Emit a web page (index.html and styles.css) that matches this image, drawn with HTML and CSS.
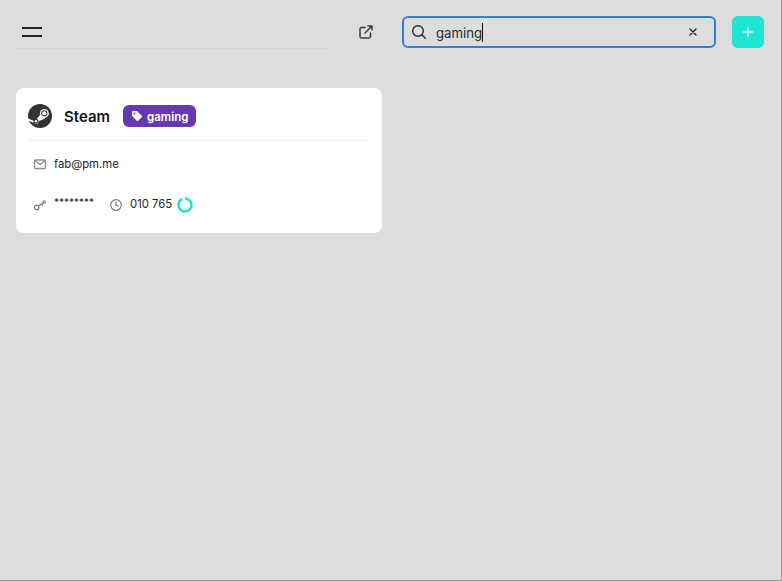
FILE: index.html
```html
<!DOCTYPE html>
<html lang="en">
<head>
<meta charset="utf-8">
<title>Vault</title>
<link rel="stylesheet" href="styles.css">
</head>
<body>
<div class="window">
  <header class="topbar">
    <div class="nav">
      <button class="menu" aria-label="Menu"><span class="bar"></span><span class="bar"></span></button>
    </div>
    <button class="open" aria-label="Open in new window">
      <svg width="16" height="16" viewBox="0 0 16 16" fill="none" stroke="#3a3d45" stroke-width="1.5" stroke-linecap="round" stroke-linejoin="round"><path d="M7 3.500H3.500a1.500 1.500 0 0 0-1.500 1.500V12.500A1.500 1.500 0 0 0 3.500 14h7.500a1.500 1.500 0 0 0 1.500-1.500V9"/><path d="M7 9 14 2M10 2h4v4"/></svg>
    </button>
    <div class="search">
      <svg class="lens" width="16" height="16" viewBox="0 0 16 16" fill="none" stroke="#23262d" stroke-width="1.400" stroke-linecap="round"><circle cx="7" cy="7" r="5.300"/><path d="m11 11 3.300 3.300"/></svg>
      <span class="query">gaming</span><span class="caret"></span>
      <svg class="clear" width="10" height="10" viewBox="0 0 10 10" fill="none" stroke="#1e2128" stroke-width="1.400" stroke-linecap="round"><path d="m2 2 6 6M8 2 2 8"/></svg>
    </div>
    <button class="add" aria-label="Add">
      <svg width="12" height="12" viewBox="0 0 12 12" fill="none" stroke="#e8fbf8" stroke-width="1.300" stroke-linecap="round"><path d="M6 1.500v9M1.500 6h9"/></svg>
    </button>
  </header>
  <main class="grid">
    <article class="card">
      <div class="head">
        <svg class="logo" width="24" height="24" viewBox="0 0 24 24"><circle cx="12" cy="12" r="12" fill="#333436"/><path d="M0 14.500 7 17.300l4.500-5.700 6-4.500L21 10l-5 5-4.800 2-1.800 3.200L0 16.500z" fill="#fff"/><circle cx="16.300" cy="9.300" r="4.400" fill="#fff"/><circle cx="16.300" cy="9.300" r="3.100" fill="#333436"/><circle cx="16.300" cy="9.300" r="2.100" fill="#fff"/><circle cx="8" cy="17.300" r="2.500" fill="#333436"/><circle cx="8" cy="17.300" r="1.200" fill="#fff"/></svg>
        <span class="name">Steam</span>
        <span class="tag">
          <svg width="12" height="12" viewBox="0 0 12 12"><path d="M1 1.800A.8.8 0 0 1 1.800 1h3.700a1 1 0 0 1 .7.300l4.500 4.500a1 1 0 0 1 0 1.400l-3.500 3.500a1 1 0 0 1-1.400 0L1.300 6.200a1 1 0 0 1-.3-.7z" fill="#fff"/><circle cx="3.500" cy="3.500" r="1" fill="#6639b2"/></svg>
          <span class="tag-text">gaming</span>
        </span>
      </div>
      <div class="row mail">
        <svg class="ic" width="14" height="14" viewBox="0 0 14 14" fill="none" stroke="#8a8a8a" stroke-width="1.300" stroke-linejoin="round"><rect x="1.500" y="3" width="11" height="8.500" rx="1"/><path d="m1.800 3.800 5.200 3.700 5.200-3.700"/></svg>
        <span class="val">fab@pm.me</span>
      </div>
      <div class="row creds">
        <svg class="ic" width="14" height="14" viewBox="0 0 14 14" fill="none" stroke="#7d7d7d" stroke-width="1.200" stroke-linecap="round"><circle cx="3.600" cy="9.400" r="2.300"/><path d="m5.500 8.100 5-3.400"/><circle cx="11.300" cy="4" r="1.100"/><path d="m8.500 6.100 1 1.200"/></svg>
        <span class="val stars">********</span>
        <svg class="ic clock" width="14" height="14" viewBox="0 0 14 14" fill="none" stroke="#7d7d7d" stroke-width="1.200" stroke-linecap="round"><circle cx="7" cy="7" r="5.300"/><path d="M7 3.800V7l2.200 1"/></svg>
        <span class="val code">010 765</span>
        <svg class="timer" width="16" height="16" viewBox="0 0 16 16" fill="none" stroke="#1fe5d3" stroke-width="2.600"><path d="M8 1.500A6.500 6.500 0 1 1 1.500 8 6.500 6.500 0 0 1 5.500 2"/></svg>
      </div>
    </article>
  </main>
</div>
</body>
</html>
```
FILE: styles.css
```css
* { box-sizing: border-box; }
html, body { margin: 0; height: 100%; }
body { font-family: Inter, "Liberation Sans", sans-serif; color: #1b1d23; background: #dddddd; }
button { border: 0; padding: 0; background: none; font: inherit; }
.window {
  height: 581px;
  border-right: 1px solid #a3a3a3;
  border-bottom: 1px solid #9a9a9a;
  padding: 16px 17px 0 16px;
}
.topbar { display: flex; align-items: center; height: 32px; }
.nav {
  width: 315px;
  height: 32px;
  display: flex;
  align-items: center;
  padding-left: 6px;
  box-shadow: 0 1px 1px rgba(0, 0, 0, .03), 0 0 1px rgba(0, 0, 0, .03);
}
.menu { display: flex; flex-direction: column; gap: 6px; width: 20px; }
.bar { display: block; height: 2px; background: #1e2129; }
.open { width: 16px; height: 16px; margin-left: 27px; display: flex; }
.search {
  width: 314px;
  height: 32px;
  margin-left: 28px;
  border: 2px solid #2f80d3;
  border-radius: 6px;
  display: flex;
  align-items: center;
  padding: 0 16px 0 7px;
  font-size: 13.2px;
}
.lens { flex: none; }
.query { margin: 2px 0 0 9px; color: #23262d; }
.caret { width: 1px; height: 19px; background: #111; margin-top: 1px; }
.clear { margin-left: auto; }
.add {
  width: 32px;
  height: 32px;
  margin-left: 16px;
  border-radius: 6px;
  background: #1fe5d3;
  display: flex;
  align-items: center;
  justify-content: center;
}
.grid { margin-top: 40px; }
.card {
  width: 366px;
  height: 145px;
  background: #fff;
  border-radius: 8px;
  padding: 0 13px 0 12px;
}
.head {
  height: 53px;
  display: flex;
  align-items: center;
  padding-top: 3px;
  border-bottom: 1px solid #ededf1;
}
.logo { flex: none; }
.name { font-size: 15px; font-weight: 600; margin: 1px 0 0 12px; color: #15171c; }
.tag {
  display: flex;
  align-items: center;
  gap: 4px;
  height: 22px;
  margin-left: 13px;
  padding: 0 8px;
  border-radius: 6px;
  background: #6639b2;
  color: #fff;
  font-size: 11.5px;
  font-weight: 600;
}
.tag-text { margin-top: 2px; }
.row { display: flex; align-items: center; font-size: 11.3px; }
.mail { margin-top: 16px; height: 14px; }
.creds { margin-top: 26px; height: 16px; }
.ic { flex: none; margin-left: 5px; }
.val { margin-left: 7px; color: #23262d; }
.stars { font-size: 10px; position: relative; top: -3px; }
.clock { margin-left: 15px; }
.code { margin-left: 7px; font-size: 11.3px; position: relative; top: -1px; }
.timer { margin-left: 5px; flex: none; }
```
